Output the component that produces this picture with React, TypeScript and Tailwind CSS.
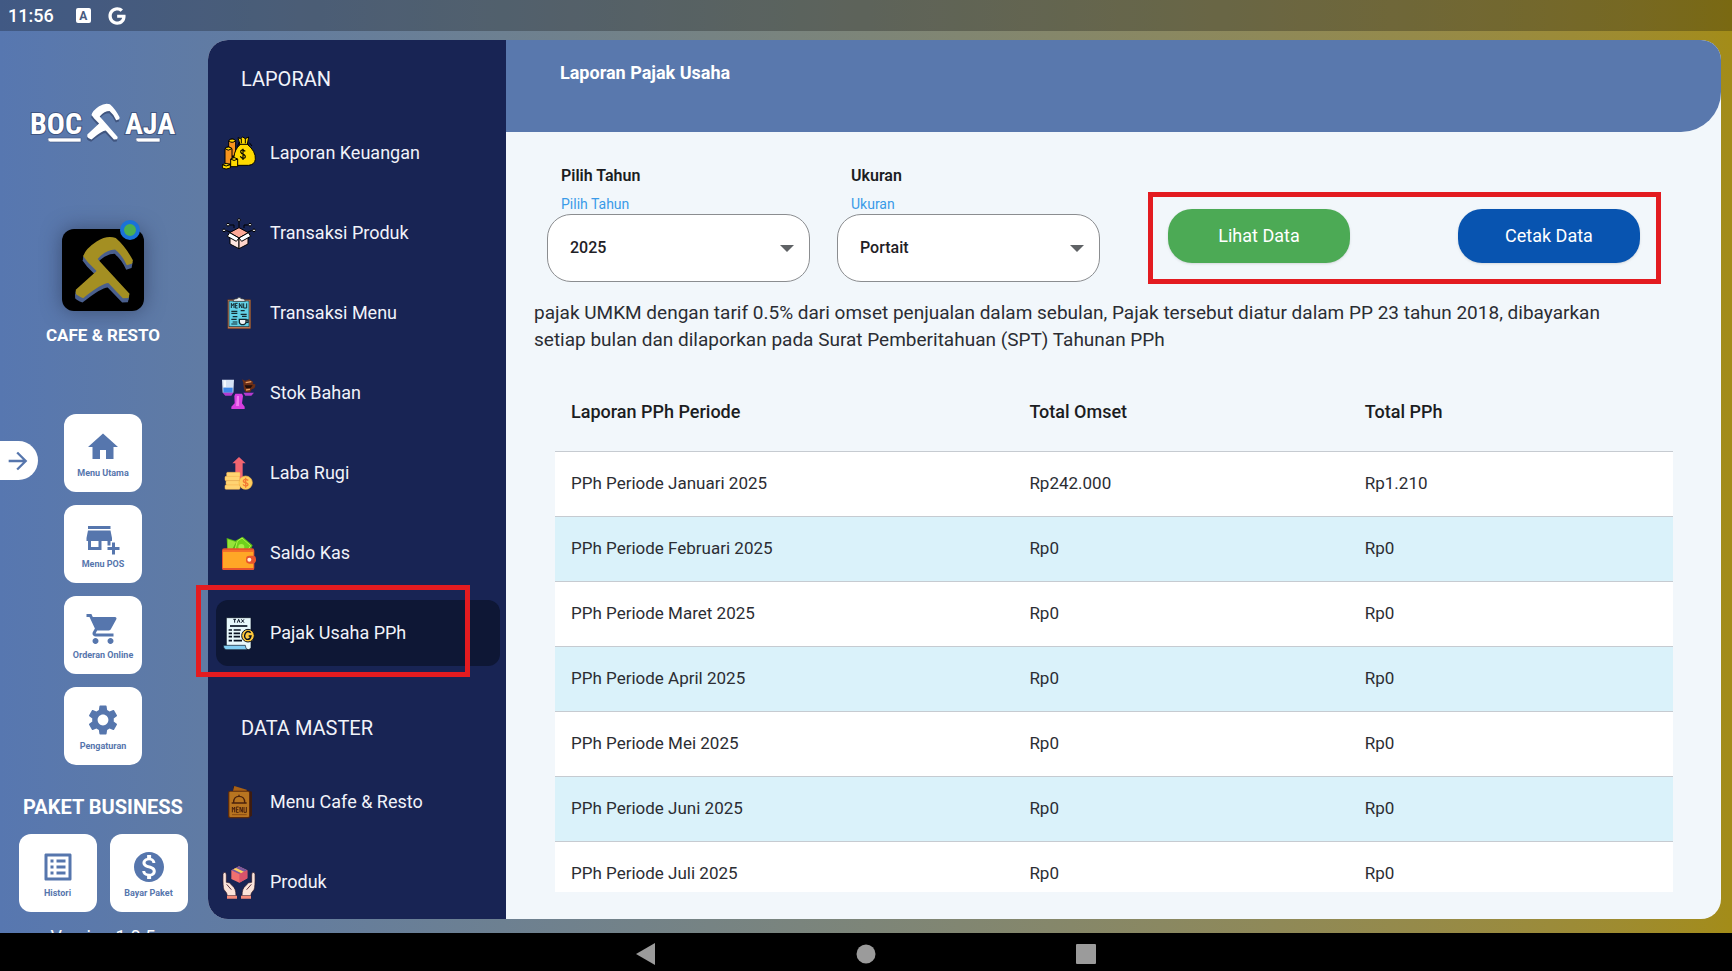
import { useState } from "react";
import type { ReactElement } from "react";

// Icons
import {
    MdAddBusiness,
    MdArrowForward,
    MdHome,
    MdListAlt,
    MdMonetizationOn,
    MdSettings,
    MdShoppingCart,
} from "react-icons/md";
import { FaGoogle } from "react-icons/fa";

const markPath =
    "M250 768 Q256 746 290 724 Q322 704 347 714 Q375 738 398 780 L396 790 L380 795 Q366 764 345 748 Q318 748 293 776 L312 797 L388 880 L385 892 L368 893 L325 848 Q306 848 250 893 Q232 886 228 880 L228 868 L290 812 L264 786 Z";

const Logo = () => (
    <svg viewBox="0 0 147 42" className="w-[147px] h-[42px] shrink-0" role="img" aria-label="BOC AJA">
        <g
            fontFamily="'Liberation Sans Narrow', 'Roboto Condensed', 'DejaVu Sans Condensed', sans-serif"
            fontWeight="700"
            fontSize="30"
            fill="#fff"
            stroke="#40557f"
            strokeWidth="2"
            paintOrder="stroke"
        >
            <text x="26" y="31" textAnchor="middle">BOC</text>
            <text x="120" y="31" textAnchor="middle">AJA</text>
        </g>
        <path d="M18 35 H51 V39 H20 Q17 38 18 35 Z M106 35 H130 V39 H108 Q105 38 106 35 Z" fill="#fff" stroke="#40557f" strokeWidth="0.6" />
        <g transform="translate(14 -138.6) scale(0.19 0.196)">
            <path d={markPath} transform="translate(-2 12)" fill="#40557f" />
            <path d={markPath} fill="#fff" />
        </g>
    </svg>
);

const StoreMark = () => (
    <svg viewBox="187 687 244 244" className="w-full h-full" aria-hidden="true">
        <path d={markPath} transform="translate(-2 13)" fill="#4a5f8d" />
        <path d={markPath} transform="translate(-1 6)" fill="#4a5f8d" />
        <path d={markPath} fill="#a48f22" />
    </svg>
);

const MoneyBagIcon = () => (
    <svg viewBox="0 0 102 102" className="size-[34px]" stroke="#000" strokeWidth="3" aria-hidden="true">
        <path d="M20 14 Q30 4 41 14 V60 H20 Z" fill="#f7931e" />
        <path d="M20 14 Q30 4 41 14 Q30 24 20 14 Z" fill="#ffda00" />
        <path d="M9 38 Q18 28 30 38 V84 H9 Z" fill="#f7931e" />
        <path d="M9 38 Q18 28 30 38 Q18 47 9 38 Z" fill="#ffda00" />
        <path d="M48 5 L56 8 L62 3 L70 8 L80 3 L76 25 Q102 46 100 70 Q98 86 80 88 H46 Q32 84 36 62 Q38 40 54 26 Z" fill="#ffda00" />
        <path d="M52 25 H80 M52 18 L46 32 M82 20 L90 30 M58 8 V22 M70 8 V22" fill="none" />
        <path d="M70 46 Q56 38 56 48 Q58 54 64 55 Q72 58 69 65 Q60 70 55 61 M63 38 V72" fill="none" strokeWidth="3.5" />
        <path d="M26 69 Q36 60 47 69 V92 H26 Z" fill="#ffda00" />
        <path d="M26 69 Q36 78 47 69" fill="none" />
        <path d="M1 86 Q12 78 25 86 V96 Q12 102 1 96 Z" fill="#ffda00" />
        <path d="M1 86 Q12 94 25 86" fill="none" />
    </svg>
);

const BoxIcon = () => (
    <svg viewBox="0 0 102 102" className="size-[34px]" stroke="#000" strokeWidth="3" aria-hidden="true">
        <path d="M51 34 V12 M36 36 V27 L22 27 M66 36 V27 H80 M24 48 L14 44 H5 M78 48 L88 44 H97" fill="none" />
        <g fill="#fff">
            <circle cx="51" cy="12" r="4" /><circle cx="18" cy="26" r="4" /><circle cx="84" cy="26" r="4" />
            <circle cx="6" cy="43" r="4" /><circle cx="96" cy="43" r="4" />
        </g>
        <path d="M51 35 L79 50 L51 66 L23 50 Z" fill="#ffa996" />
        <path d="M24 58 L51 68 V98 L24 84 Z" fill="#fde6e0" />
        <path d="M78 58 L51 68 V98 L78 84 Z" fill="#ffd5cb" />
        <path d="M23 50 L51 66 L43 76 L16 61 Z" fill="#fff" />
        <path d="M79 50 L51 66 L59 76 L86 61 Z" fill="#fff" />
    </svg>
);

const ClipboardIcon = () => (
    <svg viewBox="0 0 102 102" className="size-[34px]" aria-hidden="true">
        <rect x="16" y="10" width="71" height="89" rx="3" fill="#5c3a2c" />
        <rect x="18" y="12" width="67" height="85" fill="#c07552" />
        <rect x="21" y="15" width="60" height="77" fill="#63d1e6" stroke="#15363f" strokeWidth="2" />
        <path d="M33 16 Q33 7 45 8 Q51 0 58 8 Q70 7 70 16 Z" fill="#eef2f4" stroke="#222" strokeWidth="2" />
        <path d="M28 36 V22 L32 29 L36 22 V36 M47 22 H40 V36 H47 M40 29 H46 M52 36 V22 L60 36 V22 M65 22 V36 H74 V22" fill="none" stroke="#142a30" strokeWidth="3" />
        <path d="M28 46 H46 M28 52 H46 M56 44 H68 M56 55 H74 M32 62 H46 M28 70 H44 M32 78 H46 M28 84 H46 M60 61 H74" stroke="#142a30" strokeWidth="3.5" />
        <path d="M52 70 H72 V79 Q70 86 62 86 Q54 86 52 79 Z M72 72 H78 V79 H70" fill="#eef2f4" stroke="#142a30" strokeWidth="4" />
    </svg>
);

const ScaleIcon = () => (
    <svg viewBox="0 0 102 102" className="size-[34px]" aria-hidden="true">
        <path d="M0 11 H36 L34 50 H2 Z" fill="#d5e2f5" />
        <path d="M4 35 H32 V50 H4 Z" fill="#3c86e8" />
        <path d="M5 13 H12 V33 H5 Z" fill="#f5f8fd" />
        <path d="M64 20 L60 10 L70 14 L82 10 L94 18 L92 24 L100 25 Q101 38 89 40 L84 49 H72 Q64 42 64 20 Z" fill="#6b2f18" />
        <path d="M68 28 H92 L86 36 H72 Z" fill="#1e0d0a" />
        <path d="M71 20 L88 17 M72 42 L84 40" stroke="#eb9f63" strokeWidth="4" />
        <path d="M2 50 H34 L28 59 H10 Z M64 50 H96 L88 59 H70 Z" fill="#b33bd0" />
        <path d="M37 60 L40 53 H60 L63 60 L60 82 L68 92 V99 H28 V92 L38 82 Z" fill="#d63fe0" />
        <path d="M45 60 H51 V90 H42 Z" fill="#f07af0" />
    </svg>
);

const ProfitIcon = () => (
    <svg viewBox="0 0 102 102" className="size-[34px]" aria-hidden="true">
        <path d="M51 3 L71 22 H62 V72 H40 V22 H31 Z" fill="#f26470" />
        <g fill="#ffd472" stroke="#f8b650" strokeWidth="1.5">
            <rect x="14" y="49" width="40" height="13" rx="3" />
            <rect x="9" y="61" width="44" height="13" rx="3" />
            <rect x="12" y="74" width="42" height="13" rx="3" />
            <rect x="9" y="87" width="45" height="13" rx="3" />
        </g>
        <circle cx="71" cy="80" r="20" fill="#ffce5f" stroke="#f8b843" strokeWidth="2" />
        <path d="M79 73 Q66 66 64 75 Q65 80 72 80 Q80 83 77 88 Q68 92 63 85 M71 65 V95" fill="none" stroke="#f27a35" strokeWidth="4" />
    </svg>
);

const WalletIcon = () => (
    <svg viewBox="0 0 102 102" className="size-[34px]" aria-hidden="true">
        <path d="M14 6 L40 14 L62 2 L92 28 L84 46 H16 Z" fill="#56b814" />
        <path d="M17 10 L42 18 L28 45 H17 Z" fill="#97e339" />
        <path d="M46 15 L60 6 L86 29 L76 45 H38 Z" fill="#6fd01b" stroke="#b4f34a" strokeWidth="3" />
        <circle cx="58" cy="33" r="9" fill="#a9ee45" />
        <rect x="0" y="37" width="97" height="66" rx="7" fill="#e8532c" />
        <path d="M3 44 H94 V96 H3 Z" fill="#ffa726" />
        <path d="M3 43 H94 V48 H3 Z" fill="#f4702a" />
        <rect x="72" y="59" width="30" height="24" rx="10" fill="#e8532c" />
        <circle cx="82" cy="71" r="6" fill="#fff0d8" />
    </svg>
);

const TaxIcon = () => (
    <svg viewBox="0 0 102 102" className="size-[34px]" stroke="#071021" strokeWidth="2" aria-hidden="true">
        <path d="M13 5 H87 V94 Q86 101 78 101 H13 Z" fill="#e8f8fc" />
        <path d="M4 88 H70 Q70 100 78 101 H12 Q4 100 4 88 Z" fill="#82cdf2" />
        <path d="M34 10 H42 M38 10 V20 M46 20 L50 10 L54 20 M58 10 L66 20 M66 10 L58 20" fill="none" strokeWidth="3" />
        <path d="M24 30 H76" strokeWidth="5" />
        <path d="M20 42 H30 M20 52 H30 M20 62 H30 M20 74 H30 M35 42 H56 M35 52 H54 M35 62 H54 M35 74 H60" strokeWidth="5" />
        <circle cx="78" cy="59" r="19" fill="#ffc83d" strokeWidth="3" />
        <path d="M86 50 Q76 42 70 52 Q64 64 74 70 Q84 72 87 60 H80" fill="none" strokeWidth="4" />
    </svg>
);

const MenuBookIcon = () => (
    <svg viewBox="0 0 102 102" className="size-[34px]" aria-hidden="true">
        <path d="M34 3 L90 20 V92 L80 98 H34 Z" fill="#3d1c10" />
        <path d="M37 3 L74 14 V22 H32 Z" fill="#a86116" />
        <rect x="18" y="17" width="66" height="83" rx="6" fill="#5b2b0e" />
        <rect x="22" y="20" width="59" height="76" rx="3" fill="#b87420" />
        <path d="M29 54 H74 M35 52 Q35 34 51 34 Q68 34 68 52 M51 34 V29" fill="none" stroke="#4a210c" strokeWidth="4" />
        <path d="M31 82 V66 L35 73 L38 66 V82 M50 66 H43 V82 H50 M43 74 H49 M54 82 V66 L61 82 V66 M66 66 V82 H73 V66" fill="none" stroke="#4a210c" strokeWidth="3" />
        <path d="M30 89 H74" stroke="#8b4b12" strokeWidth="3" />
    </svg>
);

const HandsIcon = () => (
    <svg viewBox="0 0 102 102" className="size-[34px]" aria-hidden="true">
        <path d="M28 16 L51 4 L76 16 V40 L52 53 L28 42 Z" fill="#f0706f" />
        <path d="M28 16 L51 4 L76 16 L52 27 Z" fill="#7c5a9e" />
        <path d="M34 13 L42 9 L66 20 L58 25 Z" fill="#ffd35c" />
        <path d="M52 27 V53 L76 40 V16 Z" fill="#d9536b" />
        <g fill="#fbe3d9" stroke="#2c1524" strokeWidth="2">
            <path d="M3 28 Q3 22 9 22 Q13 23 13 30 V52 Q22 50 31 62 Q42 70 42 92 H16 Q16 84 6 74 Q2 66 3 28 Z" />
            <path d="M99 28 Q99 22 93 22 Q89 23 89 30 V52 Q80 50 71 62 Q60 70 60 92 H86 Q86 84 96 74 Q100 66 99 28 Z" />
        </g>
        <path d="M14 58 L28 74 M88 58 L74 74" stroke="#5c3340" strokeWidth="3" />
        <path d="M15 92 H45 V101 H15 Z M57 92 H87 V101 H57 Z" fill="#f58b78" />
    </svg>
);

type MenuItem = { id: number; label: string; icon: ReactElement };

const reportMenu: MenuItem[] = [
    { id: 0, label: "Laporan Keuangan", icon: <MoneyBagIcon /> },
    { id: 1, label: "Transaksi Produk", icon: <BoxIcon /> },
    { id: 2, label: "Transaksi Menu", icon: <ClipboardIcon /> },
    { id: 3, label: "Stok Bahan", icon: <ScaleIcon /> },
    { id: 4, label: "Laba Rugi", icon: <ProfitIcon /> },
    { id: 5, label: "Saldo Kas", icon: <WalletIcon /> },
    { id: 6, label: "Pajak Usaha PPh", icon: <TaxIcon /> },
];

const masterMenu: MenuItem[] = [
    { id: 7, label: "Menu Cafe & Resto", icon: <MenuBookIcon /> },
    { id: 8, label: "Produk", icon: <HandsIcon /> },
];

const shortcuts = [
    { id: 0, label: "Menu Utama", icon: <MdHome /> },
    { id: 1, label: "Menu POS", icon: <MdAddBusiness /> },
    { id: 2, label: "Orderan Online", icon: <MdShoppingCart /> },
    { id: 3, label: "Pengaturan", icon: <MdSettings /> },
];

const packageLinks = [
    { id: 0, label: "Histori", icon: <MdListAlt /> },
    { id: 1, label: "Bayar Paket", icon: <MdMonetizationOn /> },
];

const rows = [
    { month: "Januari", omset: "Rp242.000", pph: "Rp1.210" },
    { month: "Februari", omset: "Rp0", pph: "Rp0" },
    { month: "Maret", omset: "Rp0", pph: "Rp0" },
    { month: "April", omset: "Rp0", pph: "Rp0" },
    { month: "Mei", omset: "Rp0", pph: "Rp0" },
    { month: "Juni", omset: "Rp0", pph: "Rp0" },
    { month: "Juli", omset: "Rp0", pph: "Rp0" },
];

const ShortcutButton = ({ label, icon }: { label: string; icon: ReactElement }) => (
    <button className="flex flex-col items-center justify-center size-[78px] shrink-0 pt-1 rounded-xl bg-white text-[#5676ad]">
        <span className="text-[36px]">{icon}</span>
        <span className="text-[9px] leading-4 font-bold whitespace-nowrap">{label}</span>
    </button>
);

const SideLink = ({ item, active, onSelect }: { item: MenuItem; active: boolean; onSelect: () => void }) => (
    <li className="relative">
        <a
            href="#"
            onClick={onSelect}
            aria-current={active ? "page" : undefined}
            className={`flex items-center gap-3.5 h-[66px] pl-1.5 rounded-xl text-lg text-[#f1f3fa] ${active ? "bg-[#0e1735]" : ""}`}
        >
            {item.icon}
            {item.label}
        </a>
        {active && <span className="absolute -left-5 right-[30px] -top-[15px] -bottom-[11px] border-[5px] border-[#e31b20] pointer-events-none" />}
    </li>
);

const SelectField = ({ id, title, options }: { id: string; title: string; options: string[] }) => (
    <div className="flex flex-col w-[263px]">
        <span className="pl-3.5 text-base leading-6 font-semibold text-[#1b1d22]">{title}</span>
        <label htmlFor={id} className="mt-1.5 pl-3.5 text-sm leading-5 text-[#3a9be8]">{title}</label>
        <div className="relative">
            <select id={id} className="w-full h-[68px] px-[22px] appearance-none rounded-3xl border border-[#8b8d90] bg-white text-base font-medium text-[#1f2126]">
                {options.map((option) => (
                    <option key={option}>{option}</option>
                ))}
            </select>
            <svg viewBox="0 0 14 7" className="absolute right-4 top-[31px] w-3.5 h-[7px] pointer-events-none" fill="#5f6265" aria-hidden="true">
                <path d="M0 0 H14 L7 7 Z" />
            </svg>
        </div>
    </div>
);

export default function App() {
    const [activeId, setActiveId] = useState(6);

    return (
        <div className="flex flex-col h-screen overflow-hidden font-['Roboto',sans-serif] bg-black">
            <div className="flex flex-col flex-1 min-h-0 bg-linear-to-r from-[#5777b0] to-[#a38c18]">
                <header className="flex items-center h-[31px] shrink-0 pl-2 bg-black/25 text-white">
                    <time className="text-lg leading-6 font-medium">11:56</time>
                    <span className="ml-[22px] flex items-center justify-center size-[15px] rounded-xs bg-white text-xs font-bold text-[#475a7e]">A</span>
                    <FaGoogle className="ml-[17px] size-[18px]" />
                </header>

                <div className="flex flex-1 min-h-0">
                    <aside className="relative flex flex-col items-center w-52 shrink-0 pt-[72px] pr-0.5 overflow-hidden text-white">
                        <Logo />
                        <div className="relative mt-[84px] size-[82px] shrink-0 rounded-xl bg-black shadow-[0_0_20px_rgba(40,50,80,0.6)]">
                            <StoreMark />
                            <span className="absolute -top-[9px] right-1 size-5 rounded-full border-4 border-[#1a72d8] bg-[#4caf50]" />
                        </div>
                        <p className="mt-3 text-[17px] leading-6 font-bold">CAFE &amp; RESTO</p>

                        <nav className="mt-[67px] flex flex-col gap-[13px]">
                            {shortcuts.map((item) => (
                                <ShortcutButton key={item.id} label={item.label} icon={item.icon} />
                            ))}
                        </nav>

                        <p className="mt-7 text-xl leading-7 font-bold">PAKET BUSINESS</p>
                        <div className="mt-[13px] flex gap-[13px]">
                            {packageLinks.map((item) => (
                                <ShortcutButton key={item.id} label={item.label} icon={item.icon} />
                            ))}
                        </div>
                        <p className="mt-[13px] text-lg leading-6">Version 1.0.5</p>

                        <button aria-label="Buka menu" className="absolute left-0 top-[410px] flex items-center justify-end w-[38px] h-[39px] pr-1.5 rounded-r-full bg-white text-[28px] text-[#5676ad]">
                            <MdArrowForward />
                        </button>
                    </aside>

                    <div className="flex flex-1 min-w-0 mt-[9px] mb-[14px] mr-[11px] rounded-[20px] bg-[#f2f7fb]">
                        <nav className="w-[298px] shrink-0 pt-[25px] pl-2 pr-1.5 rounded-l-[20px] bg-[#182454]">
                            <h2 className="pl-[25px] text-xl leading-7 text-[#f1f3fa]">LAPORAN</h2>
                            <ul className="mt-[27px] flex flex-col gap-3.5">
                                {reportMenu.map((item) => (
                                    <SideLink key={item.id} item={item} active={item.id === activeId} onSelect={() => setActiveId(item.id)} />
                                ))}
                            </ul>
                            <h2 className="mt-12 pl-[25px] text-xl leading-7 text-[#f1f3fa]">DATA MASTER</h2>
                            <ul className="mt-[27px] flex flex-col gap-3.5">
                                {masterMenu.map((item) => (
                                    <SideLink key={item.id} item={item} active={item.id === activeId} onSelect={() => setActiveId(item.id)} />
                                ))}
                            </ul>
                        </nav>

                        <main className="flex flex-col flex-1 min-w-0">
                            <div className="h-[92px] shrink-0 pt-[21px] pl-[54px] rounded-tr-[20px] rounded-br-[40px] bg-[#5978ad]">
                                <h1 className="text-lg leading-6 font-bold text-white">Laporan Pajak Usaha</h1>
                            </div>

                            <div className="flex justify-between items-start pt-8 pl-[41px] pr-[81px]">
                                <div className="flex gap-[27px]">
                                    <SelectField id="tahun" title="Pilih Tahun" options={["2025", "2024", "2023"]} />
                                    <SelectField id="ukuran" title="Ukuran" options={["Portait", "Landscape"]} />
                                </div>
                                <div className="relative mt-[45px] flex gap-[108px]">
                                    <button className="w-[182px] h-[54px] rounded-3xl bg-[#4caa55] text-lg text-white shadow-sm">Lihat Data</button>
                                    <button className="w-[182px] h-[54px] rounded-3xl bg-[#0854b0] text-lg text-white shadow-sm">Cetak Data</button>
                                    <span className="absolute -left-5 -right-[21px] -top-[17px] -bottom-[21px] border-[5px] border-[#e31b20] pointer-events-none" />
                                </div>
                            </div>

                            <p className="mt-[17px] pl-7 pr-[70px] text-[19px] leading-[27px] text-[#2b2d33]">
                                pajak UMKM dengan tarif 0.5% dari omset penjualan dalam sebulan, Pajak tersebut diatur dalam PP 23 tahun 2018, dibayarkan setiap bulan dan dilaporkan pada Surat Pemberitahuan (SPT) Tahunan PPh
                            </p>

                            <div className="flex-1 min-h-0 mt-5 mb-[27px] ml-[49px] mr-[48px] overflow-hidden">
                                <table className="w-full table-fixed text-left text-[17px] text-[#2b2d33]">
                                    <thead>
                                        <tr className="h-[78px] text-lg text-[#1b1d22]">
                                            <th className="w-[41%] px-4 font-medium">Laporan PPh Periode</th>
                                            <th className="w-[30%] px-4 font-medium">Total Omset</th>
                                            <th className="px-4 font-medium">Total PPh</th>
                                        </tr>
                                    </thead>
                                    <tbody>
                                        {rows.map((row) => (
                                            <tr key={row.month} className="h-[65px] border-t border-[#c6cbd1] odd:bg-white even:bg-[#daf2fa]">
                                                <td className="px-4">PPh Periode {row.month} 2025</td>
                                                <td className="px-4">{row.omset}</td>
                                                <td className="px-4">{row.pph}</td>
                                            </tr>
                                        ))}
                                    </tbody>
                                </table>
                            </div>
                        </main>
                    </div>
                </div>
            </div>

            <footer className="flex items-center justify-center h-[38px] shrink-0 pt-1 bg-black">
                <button aria-label="Kembali" className="flex justify-center w-[220px]">
                    <svg viewBox="0 0 22 22" className="size-[22px]" fill="#9b9b9b"><path d="M1 11 L20 0 V22 Z" /></svg>
                </button>
                <button aria-label="Beranda" className="flex justify-center w-[220px]">
                    <svg viewBox="0 0 22 22" className="size-[22px]" fill="#9b9b9b"><circle cx="11" cy="11" r="9.5" /></svg>
                </button>
                <button aria-label="Aplikasi terbaru" className="flex justify-center w-[220px]">
                    <svg viewBox="0 0 22 22" className="size-[22px]" fill="#9b9b9b"><rect x="1" y="1" width="20" height="20" rx="1" /></svg>
                </button>
            </footer>
        </div>
    );
}
